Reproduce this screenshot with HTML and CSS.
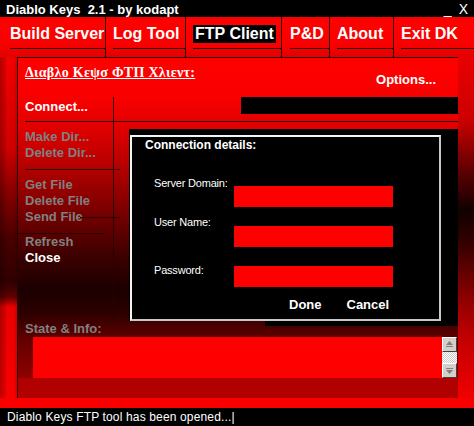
FILE: index.html
```html
<!DOCTYPE html>
<html>
<head>
<meta charset="utf-8">
<link rel="stylesheet" href="styles.css">
</head>
<body>
<div class="win">
  <div class="titlebar">
    <span class="title">Diablo Keys&nbsp; 2.1 - by kodapt</span>
    <span class="ctrls"><span class="min">_</span><span class="cls">X</span></span>
  </div>
  <div class="menubar">
    <div class="mi w1"><div class="mt">Build Server</div></div>
    <div class="mi w2"><div class="mt">Log Tool</div></div>
    <div class="mi w3"><div class="mt"><span class="hl">FTP Client</span></div></div>
    <div class="mi w4"><div class="mt">P&amp;D</div></div>
    <div class="mi w5"><div class="mt">About</div></div>
    <div class="mi w6"><div class="mt">Exit DK</div></div>
  </div>
  <div class="frame">
    <div class="lstrip"></div>
    <div class="panel">
      <div class="head">
        <span class="gtitle">Διαβλο Κεψσ ΦΤΠ Χλιεντ:</span>
        <span class="options">Options...</span>
      </div>
      <div class="connect-row">
        <div class="cl"><span class="item on">Connect...</span></div>
        <div class="blackbar"></div>
      </div>
      <div class="body-row">
        <div class="lcol">
          <div class="item off">Make Dir...</div>
          <div class="item off">Delete Dir...</div>
          <div class="rule1"></div>
          <div class="item off gf">Get File</div>
          <div class="item off">Delete File</div>
          <div class="item off sf">Send File</div>
          <div class="rule2"></div>
          <div class="item off">Refresh</div>
          <div class="item on">Close</div>
        </div>
        <div class="rwrap">
          <div class="list">
            <div class="dialog">
              <div class="dtitle">Connection details:</div>
              <div class="frow r1"><span class="lab">Server Domain:</span><span class="fbox"></span></div>
              <div class="frow r2"><span class="lab">User Name:</span><span class="fbox"></span></div>
              <div class="frow r3"><span class="lab">Password:</span><span class="fbox"></span></div>
              <div class="btns"><span>Done</span><span>Cancel</span></div>
            </div>
          </div>
        </div>
      </div>
      <div class="state">State &amp; Info:</div>
      <div class="info-row">
        <div class="infobox"></div>
        <div class="sbar">
          <div class="sbtn"><svg width="13" height="13" viewBox="0 0 13 13"><path d="M6.5 3 L10 7 L3 7 Z" fill="#808080"/><rect x="3" y="8" width="7" height="1" fill="#808080"/></svg></div>
          <div class="strack"></div>
          <div class="sbtn"><svg width="13" height="13" viewBox="0 0 13 13"><rect x="3" y="4" width="7" height="1" fill="#808080"/><path d="M3 6 L10 6 L6.5 10 Z" fill="#808080"/></svg></div>
        </div>
      </div>
      <div class="band"></div>
    </div>
    <div class="rstrip"></div>
  </div>
  <div class="bottom"></div>
  <div class="status">Diablo Keys FTP tool has been opened...|</div>
</div>
</body>
</html>
```

FILE: styles.css
```css
* { box-sizing: border-box; margin: 0; padding: 0; }
html, body { width: 474px; height: 426px; background: #000; overflow: hidden; }
body { font-family: "Liberation Sans", Arial, sans-serif; color: #fff; }

.win { width: 474px; height: 426px; display: flex; flex-direction: column; }

.titlebar {
  height: 17px; display: flex; justify-content: space-between;
  padding: 2px 6px 0 6px; font-size: 13px; font-weight: bold; line-height: 15px;
  background: #000; position: relative; z-index: 1;
}
.ctrls { display: flex; gap: 7px; font-weight: normal; font-size: 14px; line-height: 14px; }

.menubar {
  height: 40px; display: flex;
  background: linear-gradient(#ff0000 0, #fa0000 70%, #e20000 100%);
}
.mi { display: flex; flex-direction: column; border-right: 1px solid #2a0000; }
.mi .mt {
  height: 32px; border-bottom: 1px solid #2a0000; padding-top: 8px;
  font-size: 16px; font-weight: bold; line-height: 18px; white-space: nowrap;
}
.w1 { width: 106px; padding-left: 10px; }
.w2 { width: 80px; padding-left: 7px; }
.w3 { width: 96px; padding-left: 7px; }
.w4 { width: 48px; padding-left: 8px; }
.w5 { width: 64px; padding-left: 7px; }
.w6 { flex: 1; padding-left: 7px; border-right: none; }
.hl { display: inline-block; background: #000; padding: 0 2px 0 2px; }

.frame { height: 341px; display: flex; }
.lstrip {
  width: 17px;
  background:
    linear-gradient(to right, rgba(0,0,0,0.25) 0, rgba(0,0,0,0.1) 5px, rgba(0,0,0,0) 7px, rgba(0,0,0,0) 14px, rgba(0,0,0,0.15) 17px),
    linear-gradient(#f20000 0, #d00000 90px, #900000 130px, #4a0000 180px, #300000 225px, #600000 240px, #e80000 250px, #f80000 341px);
}
.rstrip {
  width: 16px;
  background: linear-gradient(#e80000 0, #cc0000 63px, #600000 113px, #120000 153px, #300000 183px, #900000 243px, #c40000 283px, #f00000 341px);
}

.panel {
  width: 441px; display: flex; flex-direction: column;
  border-left: 1px solid #2a0000; border-top: 1px solid #2a0000;
  padding-left: 7px;
  background: linear-gradient(#ff0000 0, #f80000 40px, #e00000 70px, #b00000 112px, #700000 160px, #3a0000 200px, #1c0000 232px, #2c0000 255px, #600000 280px, #900000 320px);
}

.head { height: 39px; display: flex; justify-content: space-between; }
.gtitle {
  margin-top: 6px; font-family: "Liberation Serif", "Times New Roman", serif;
  font-weight: bold; font-size: 14px; line-height: 17px; text-decoration: underline;
  letter-spacing: 0.3px;
}
.options { margin-top: 14px; margin-right: 22px; font-weight: bold; font-size: 13px; line-height: 16px; }

.item { font-weight: bold; font-size: 13px; line-height: 16px; white-space: nowrap; }
.on { color: #fff; }
.off { color: #808080; }

.connect-row { height: 25px; display: flex; border-bottom: 1px solid #2a0000; }
.cl { width: 89px; border-right: 1px solid #2a0000; }
.blackbar { width: 217px; height: 17px; margin-left: 127px; background: #000; }

.body-row { height: 199px; display: flex; }
.lcol { width: 89px; border-right: 1px solid #2a0000; padding-top: 7px; }
.rule1 { width: 95px; border-top: 1px solid #2a0000; margin-top: 8px; }
.gf { margin-top: 7px; }
.sf { position: relative; }
.sf::after {
  content: ""; position: absolute; left: 55px; top: 8px; width: 40px;
  border-top: 1px solid #2a0000;
}
.rule2 { width: 88px; margin-left: -8px; border-top: 1px solid #2a0000; margin-top: 8px; }

.rwrap { flex: 1; }
.list { position: relative; margin-left: 15px; margin-top: 7px; height: 192px; background: #000; }
.list::after {
  content: ""; position: absolute; top: 100%; left: 136px; right: 0; height: 5px; background: #000;
}

.dialog {
  position: absolute; left: 1px; top: 6px; width: 311px; height: 186px;
  background: #000; border: 2px solid; border-color: #f4f4f4 #c8c8c8 #c8c8c8 #f4f4f4;
}
.dtitle { margin-top: 1px; padding-left: 13px; font-weight: bold; font-size: 12px; line-height: 14px; }
.frow { display: flex; padding-left: 22px; }
.lab { width: 80px; font-size: 11px; line-height: 13px; white-space: nowrap; letter-spacing: -0.2px; }
.fbox { width: 159px; height: 21px; background: #ff0000; }
.r1 { margin-top: 25px; }
.r1 .fbox { margin-top: 9px; }
.r2 { margin-top: 9px; }
.r2 .fbox { margin-top: 10px; }
.r3 { margin-top: 17px; }
.r3 .fbox { margin-top: 2px; }
.btns { display: flex; gap: 25px; padding-left: 157px; margin-top: 10px; font-weight: bold; font-size: 13px; line-height: 16px; }

.state { height: 16px; color: #808080; font-weight: bold; font-size: 13px; line-height: 16px; }
.info-row { height: 41px; display: flex; padding-left: 8px; }
.infobox { width: 409px; background: #ff0000; }
.sbar { width: 15px; display: flex; flex-direction: column; }
.sbtn {
  width: 15px; height: 15px; background: #d4d0c8;
  border: 1px solid; border-color: #ffffff #404040 #404040 #ffffff;
  display: flex; align-items: center; justify-content: center;
}
.strack {
  height: 11px;
  background: repeating-conic-gradient(#ffffff 0 25%, #c8c8c8 0 50%) 0 0 / 2px 2px;
}
.band { height: 20px; margin-left: -7px; background: #b00000; }

.bottom { height: 10px; background: #f80000; }
.status { height: 18px; padding-left: 7px; font-size: 12px; line-height: 18px; background: #000; white-space: nowrap; letter-spacing: 0.15px; }
```
